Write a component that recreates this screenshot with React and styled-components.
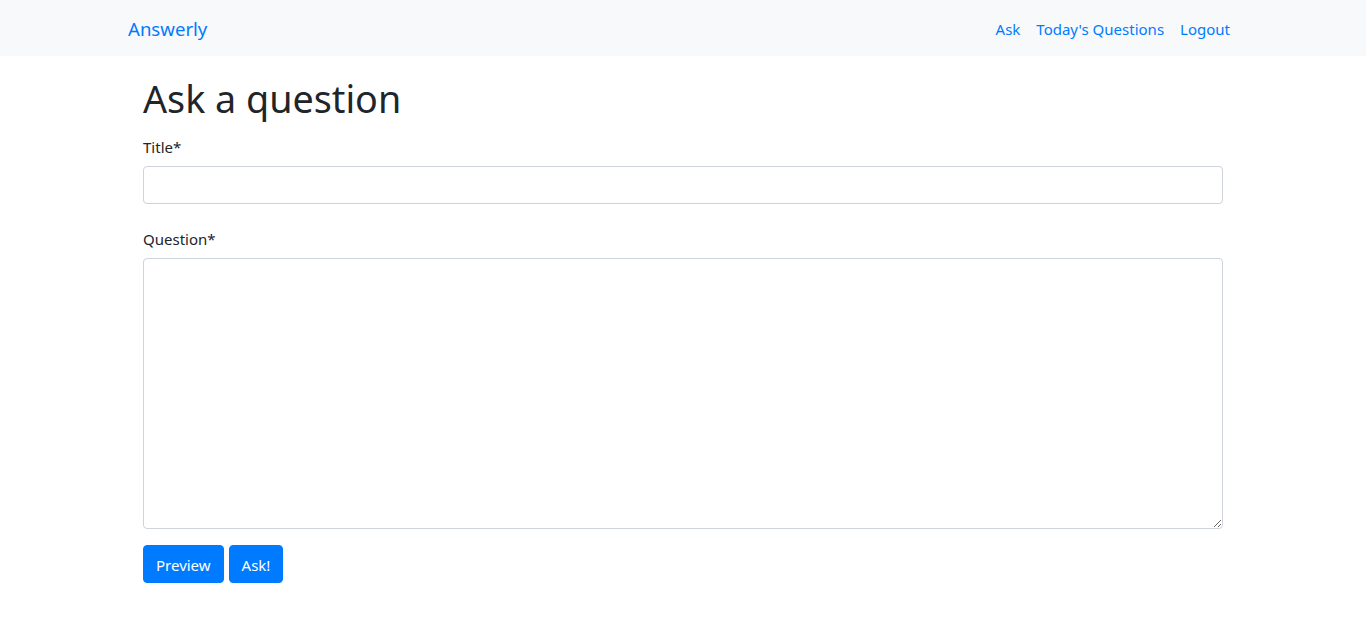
import React from "react";
import styled, { createGlobalStyle } from "styled-components";

const Global = createGlobalStyle`
  * { box-sizing: border-box; }
  body {
    margin: 0;
    font-family: "Noto Sans", "Segoe UI", Roboto, sans-serif;
    font-size: 15px;
    line-height: 24px;
    color: #212529;
    background: #fff;
  }
`;

const NavBar = styled.nav`
  height: 56px;
  background: #f8f9fa;
`;

const NavInner = styled.div`
  width: 1140px;
  margin: 0 auto;
  padding: 1px 15px 0;
  height: 100%;
  display: flex;
  align-items: center;
  justify-content: space-between;
`;

const Brand = styled.a`
  font-size: 18.6px;
  color: #007bff;
  text-decoration: none;
  line-height: 30px;
`;

const NavLinks = styled.div`
  display: flex;
`;

const NavLink = styled.a`
  color: #007bff;
  text-decoration: none;
  padding: 8px;
`;

const Main = styled.main`
  width: 1140px;
  margin: 0 auto;
  padding: 19px 30px 0;
`;

const Title = styled.h1`
  margin: 0 0 11px;
  font-size: 37.7px;
  font-weight: 400;
  line-height: 48px;
`;

const Group = styled.div`
  margin-bottom: ${(p) => p.$mb || 16}px;
`;

const Label = styled.label`
  display: block;
  margin-bottom: 8px;
  padding-top: 3px;
  line-height: 21px;
`;

const Input = styled.input`
  display: block;
  width: 100%;
  height: 38px;
  padding: 6px 12px;
  font: inherit;
  border: 1px solid #ced4da;
  border-radius: 4px;
  outline: none;
`;

const TextArea = styled.textarea`
  display: block;
  width: 100%;
  height: 271px;
  padding: 6px 12px;
  font: inherit;
  border: 1px solid #ced4da;
  border-radius: 4px;
  outline: none;
`;

const Buttons = styled.div`
  display: flex;
  gap: 5px;
`;

const Button = styled.button`
  height: 38px;
  padding: 2px 12px 0;
  font: inherit;
  color: #fff;
  background: #007bff;
  border: 1px solid #007bff;
  border-radius: 4px;
`;

export default function App() {
  return (
    <>
      <Global />
      <NavBar>
        <NavInner>
          <Brand href="#">Answerly</Brand>
          <NavLinks>
            <NavLink href="#">Ask</NavLink>
            <NavLink href="#">Today's Questions</NavLink>
            <NavLink href="#">Logout</NavLink>
          </NavLinks>
        </NavInner>
      </NavBar>
      <Main>
        <Title>Ask a question</Title>
        <Group $mb={22}>
          <Label>Title*</Label>
          <Input type="text" />
        </Group>
        <Group>
          <Label>Question*</Label>
          <TextArea />
        </Group>
        <Buttons>
          <Button>Preview</Button>
          <Button>Ask!</Button>
        </Buttons>
      </Main>
    </>
  );
}
